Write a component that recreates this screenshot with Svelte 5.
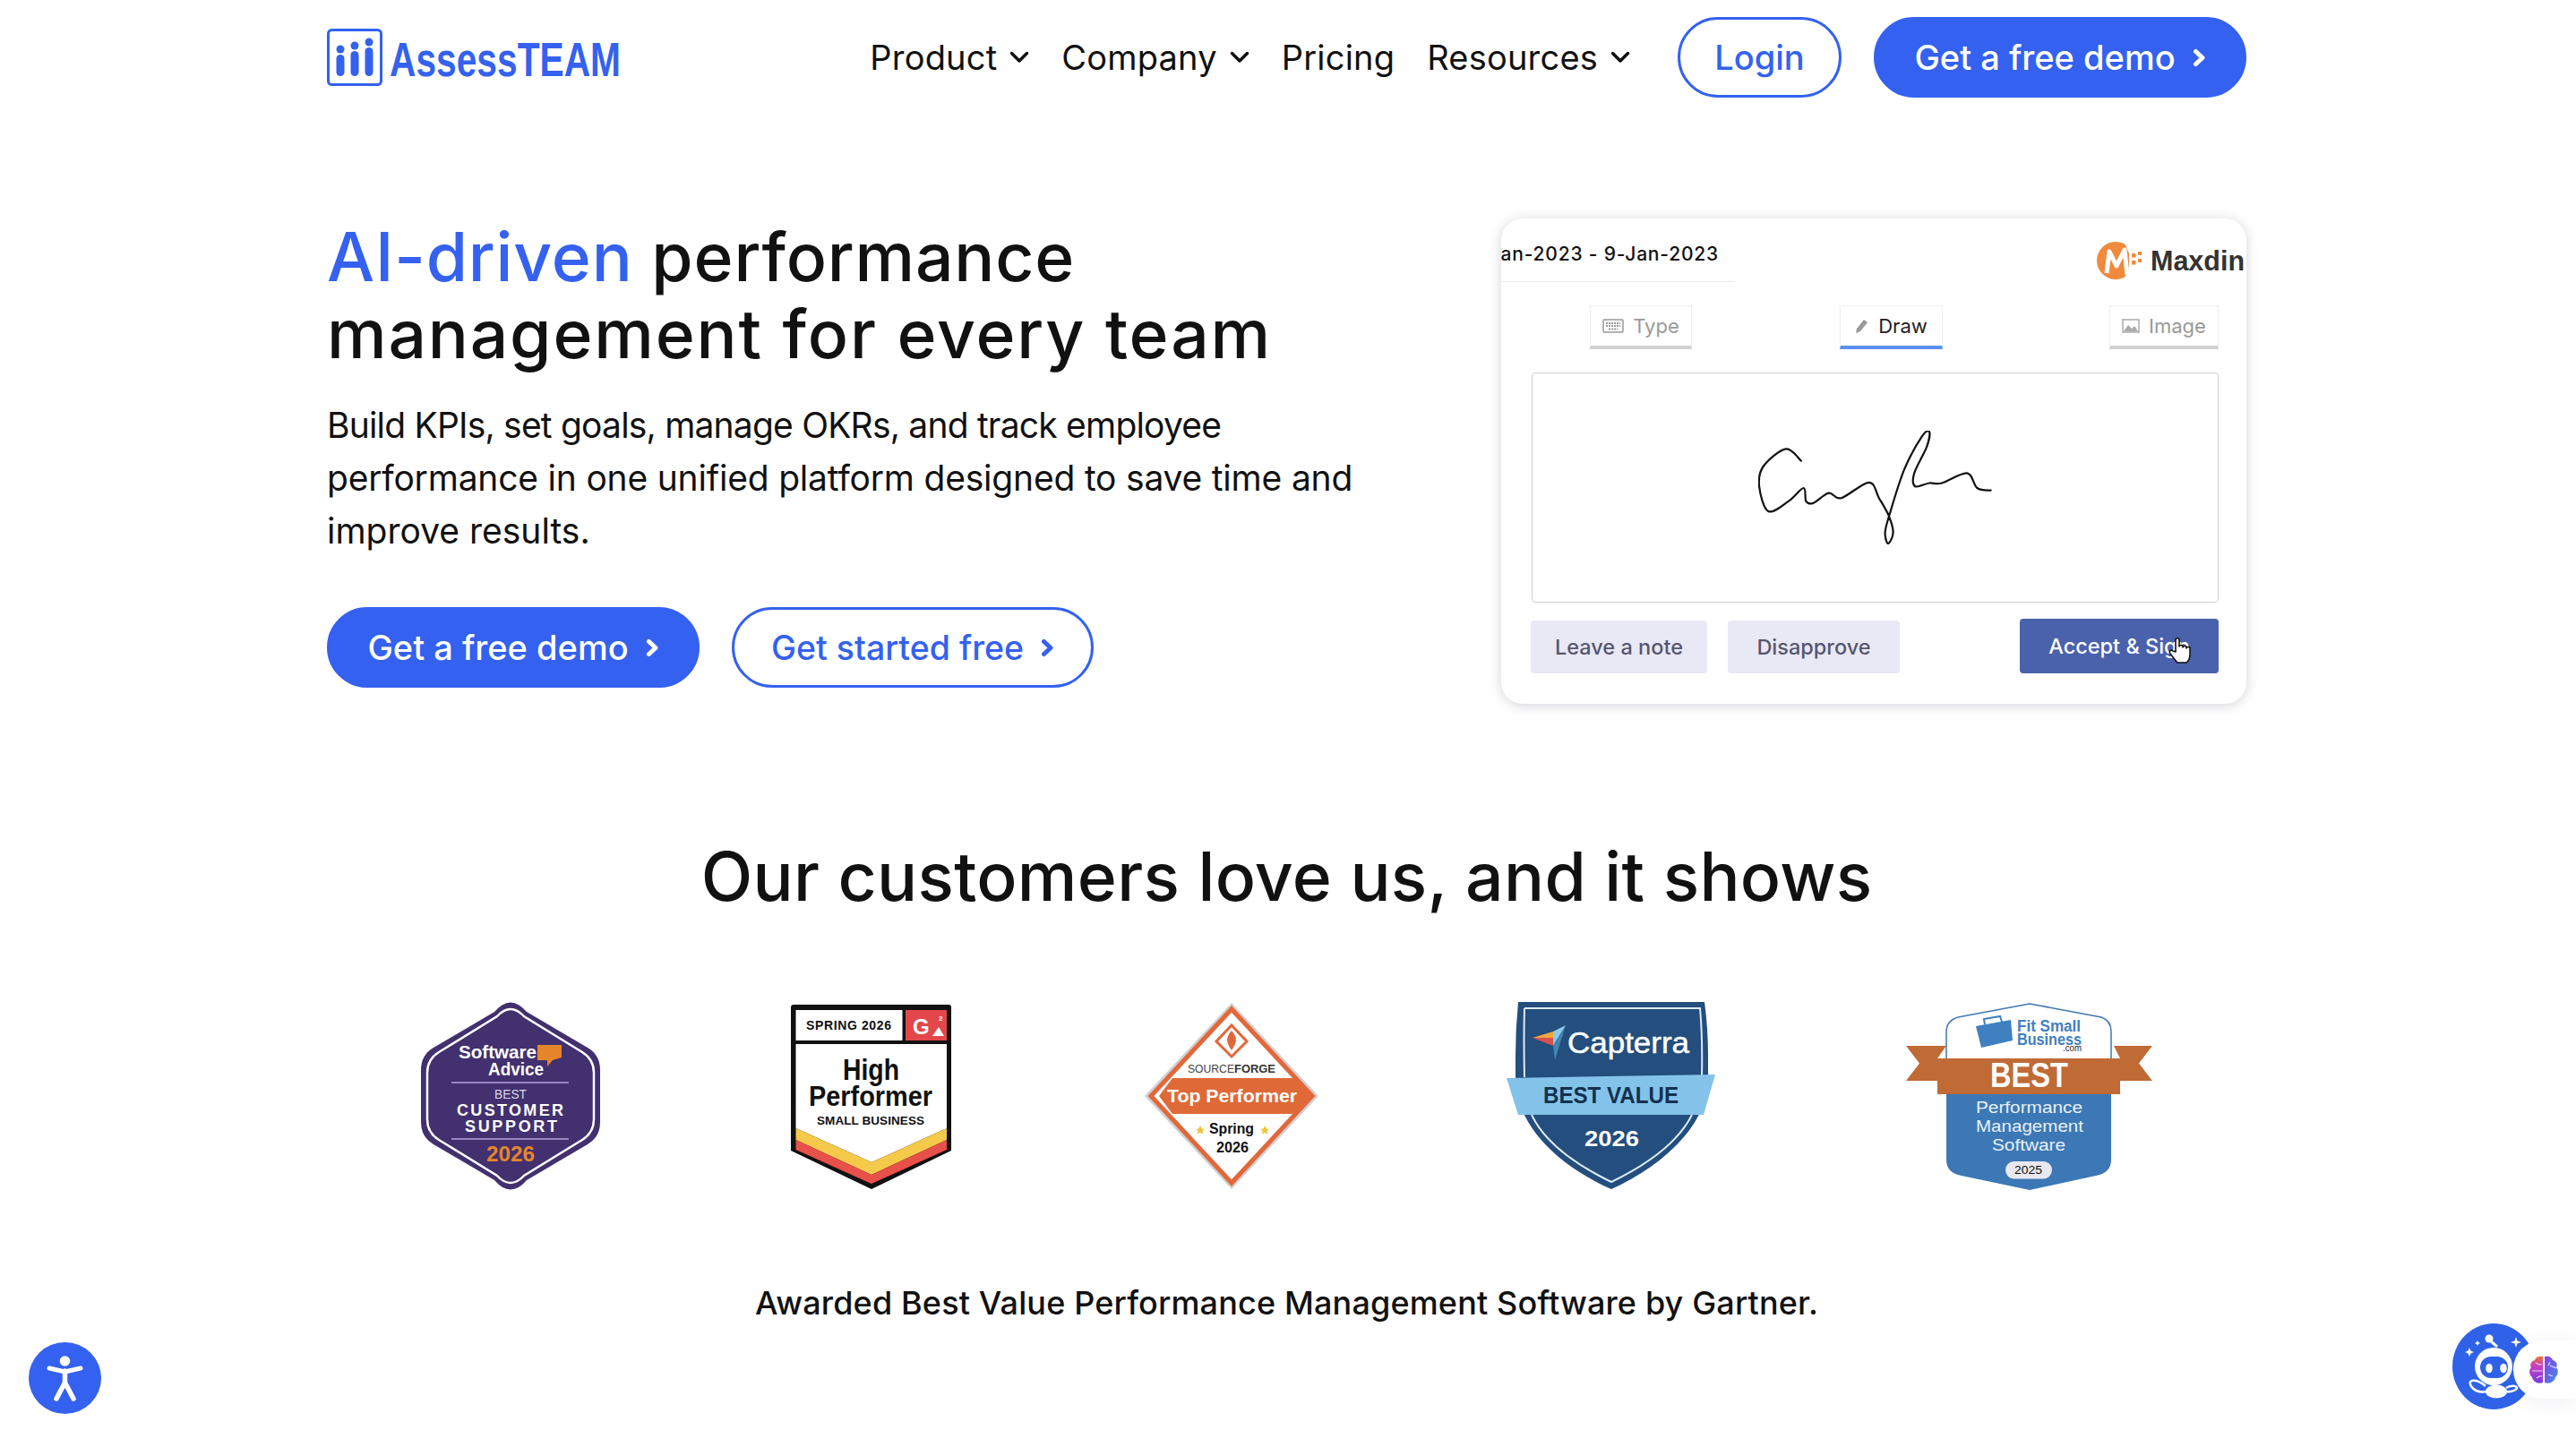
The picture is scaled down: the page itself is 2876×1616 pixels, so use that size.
<script>
	// signature traced from the reference, smoothed into a path
	const signature = [
		[47.8,33.7],[30.9,20.4],[5.6,40],[1.1,62.2],[11.2,90],[33.7,78.9],[50.6,64],[53.4,78.9],[61.8,80.7],
		[78.7,69.6],[92.7,75.2],[123.6,57.8],[134.8,75.2],[146,95.6],[150.6,114],[144.9,126],[141.6,114],[146,95.6],
		[162.9,43.7],[182.6,6.7],[191,1],[188.2,17.8],[174.2,47.4],[175.3,62.2],[191,58.5],[205,58.5],[233.1,47.4],
		[244.4,64],[259.6,66.7]
	];

	function smooth(pts) {
		let d = `M${pts[0][0]} ${pts[0][1]}`;
		for (let i = 0; i < pts.length - 1; i++) {
			const p0 = pts[i - 1] || pts[i];
			const p1 = pts[i];
			const p2 = pts[i + 1];
			const p3 = pts[i + 2] || p2;
			const c1x = p1[0] + (p2[0] - p0[0]) / 6;
			const c1y = p1[1] + (p2[1] - p0[1]) / 6;
			const c2x = p2[0] - (p3[0] - p1[0]) / 6;
			const c2y = p2[1] - (p3[1] - p1[1]) / 6;
			d += ` C${c1x.toFixed(1)} ${c1y.toFixed(1)} ${c2x.toFixed(1)} ${c2y.toFixed(1)} ${p2[0]} ${p2[1]}`;
		}
		return d;
	}

	const navItems = [
		{ label: 'Product', caret: true },
		{ label: 'Company', caret: true },
		{ label: 'Pricing', caret: false },
		{ label: 'Resources', caret: true }
	];
</script>

<div class="page">
	<header class="nav">
		<svg class="logo" width="332" height="64" viewBox="0 0 332 64">
			<rect x="1.5" y="1.5" width="59" height="61" rx="4" fill="none" stroke="#3461f0" stroke-width="3" />
			<g fill="#3461f0">
				<circle cx="15" cy="23" r="4.5" /><rect x="10.5" y="29" width="9" height="24" rx="4.5" />
				<circle cx="31" cy="19" r="4.5" /><rect x="26.5" y="25" width="9" height="28" rx="4.5" />
				<circle cx="47" cy="15" r="4.5" /><rect x="42.5" y="21" width="9" height="32" rx="4.5" />
			</g>
			<text class="sans heavy" x="70" y="53" font-size="54" fill="#3461f0" textLength="258" lengthAdjust="spacingAndGlyphs">AssessTEAM</text>
		</svg>

		<nav class="links">
			{#each navItems as item}
				<span class="link">
					{item.label}
					{#if item.caret}
						<svg width="22" height="14" viewBox="0 0 22 14"><path d="M2.500 2.500l8.500 8.500 8.500-8.500" fill="none" stroke="#111" stroke-width="3.500" stroke-linecap="round" stroke-linejoin="round" /></svg>
					{/if}
				</span>
			{/each}
		</nav>

		<button class="btn outline login">Login</button>
		<button class="btn solid nav-demo">
			Get a free demo
			<svg width="15" height="21" viewBox="0 0 15 21"><path d="M3.500 3.500l7.500 7-7.500 7" fill="none" stroke="#fff" stroke-width="5" stroke-linecap="round" stroke-linejoin="round" /></svg>
		</button>
	</header>

	<section class="hero">
		<div class="hero-copy">
			<h1><span class="accent">AI-driven</span> performance<br /><span class="h1-second">management for every team</span></h1>
			<p><span class="p-first">Build KPIs, set goals, manage OKRs, and track employee</span><br /><span class="p-second">performance in one unified platform designed to save time and</span><br />improve results.</p>
			<div class="cta">
				<button class="btn solid hero-demo">
					Get a free demo
					<svg width="15" height="21" viewBox="0 0 15 21"><path d="M3.500 3.500l7.500 7-7.500 7" fill="none" stroke="#fff" stroke-width="5" stroke-linecap="round" stroke-linejoin="round" /></svg>
				</button>
				<button class="btn outline started">
					Get started free
					<svg width="15" height="21" viewBox="0 0 15 21"><path d="M3.500 3.500l7.500 7-7.500 7" fill="none" stroke="#3461f0" stroke-width="5" stroke-linecap="round" stroke-linejoin="round" /></svg>
				</button>
			</div>
		</div>

		<div class="card">
			<div class="card-head">
				<div class="dates"><span>9-Jan-2023 - 9-Jan-2023</span></div>
				<svg class="maxdin" width="167" height="44" viewBox="0 0 167 44">
					<circle cx="21" cy="22" r="21" fill="#f08a3c" />
					<path d="M30 0H44V44H30L36 30V14Z" fill="#fff" />
					<path d="M11 36L14 12 22 28 31 10 34 38" fill="none" stroke="#fff" stroke-width="5" stroke-linejoin="round" />
					<g fill="#f08a3c"><rect x="39" y="14" width="4.500" height="4.500" /><rect x="46" y="12" width="4" height="4" /><rect x="39" y="22" width="4.500" height="4.500" /><rect x="46" y="20" width="4" height="4" /></g>
					<text class="sans heavy" x="60" y="33" font-size="32" fill="#333" textLength="105" lengthAdjust="spacingAndGlyphs">Maxdin</text>
				</svg>
			</div>

			<div class="tabs">
				<span class="tab type">
					<svg width="24" height="16" viewBox="0 0 24 16"><rect x="1" y="1" width="22" height="14" rx="1" fill="none" stroke="#999" stroke-width="1.5" /><path d="M4 5h16M4 8h16M7 11.500h10" stroke="#999" stroke-width="2" stroke-dasharray="2 1" /></svg>
					Type
				</span>
				<span class="tab draw">
					<svg width="16" height="18" viewBox="0 0 16 18"><path d="M1 17l1-5 8-10 4 3-8 10z" fill="#999" /></svg>
					Draw
				</span>
				<span class="tab image">
					<svg width="20" height="16" viewBox="0 0 20 16"><rect x="1" y="1" width="18" height="14" fill="none" stroke="#aaa" stroke-width="1.5" /><path d="M2 14l5-7 4 4 3-3 4 6z" fill="#aaa" /></svg>
					Image
				</span>
			</div>

			<div class="canvas">
				<svg width="262" height="127" viewBox="0 0 262 127"><path d={smooth(signature)} fill="none" stroke="#111" stroke-width="2.200" stroke-linecap="round" /></svg>
			</div>

			<div class="actions">
				<button class="ghost note">Leave a note</button>
				<button class="ghost reject">Disapprove</button>
				<button class="accept">
					Accept &amp; Sign
					<svg class="hand" width="26" height="30" viewBox="0 0 26 30"><path d="M8 17V4c0-3 4-3 4 0v7c0-2 4-2 4 0v1c0-2 4-2 4 0v1c0-2 4-2 4 0v7c0 4-2 8-4 9H10c-2-2-4-5-8-10-2-3 1-5 3-3z" fill="#fff" stroke="#111" stroke-width="1.6" stroke-linejoin="round" /></svg>
				</button>
			</div>
		</div>
	</section>

	<section class="proof">
		<h2>Our customers love us, and it shows</h2>

		<div class="badges">
			<!-- Software Advice -->
			<svg width="200" height="210" viewBox="0 -1 200 210">
				<path d="M82 10Q100-11 118 10L186 50Q200 58 200 75V133Q200 150 186 158L118 198Q100 219 82 198L14 158Q0 150 0 133V75Q0 58 14 50Z" fill="#42306f" />
				<path d="M85 15Q100-1 115 15L180 55Q193 63 193 78V130Q193 145 180 153L115 193Q100 209 85 193L20 153Q7 145 7 130V78Q7 63 20 55Z" fill="none" stroke="#fff" stroke-width="2.500" />
				<path d="M130 47h27v14l-10 3-6 7v-7h-11z" fill="#e5852a" />
				<text class="sans heavy" x="42" y="62" font-size="21" fill="#fff" textLength="87" lengthAdjust="spacingAndGlyphs">Software</text>
				<text class="sans heavy" x="75" y="81" font-size="21" fill="#fff" textLength="62" lengthAdjust="spacingAndGlyphs">Advice</text>
				<path d="M34 89h131M34 152h131" stroke="#b3a8dc" stroke-width="1.5" />
				<text class="sans" x="82" y="107" font-size="15" fill="#dcd8ee" textLength="36" lengthAdjust="spacingAndGlyphs">BEST</text>
				<text class="sans heavy" x="40" y="126" font-size="18" fill="#fff" textLength="119" lengthAdjust="spacing">CUSTOMER</text>
				<text class="sans heavy" x="49" y="144" font-size="18" fill="#fff" textLength="103" lengthAdjust="spacing">SUPPORT</text>
				<text class="sans heavy" x="73" y="177" font-size="23" fill="#e5852a" textLength="54" lengthAdjust="spacingAndGlyphs">2026</text>
			</svg>

			<!-- G2 -->
			<svg width="179" height="207" viewBox="0 0 179 207">
				<path d="M3 1H176Q179 1 179 4V164L90 207 0 164V4Q0 1 3 1Z" fill="#111" />
				<rect x="5.500" y="7" width="119" height="34" fill="#fff" />
				<rect x="128" y="7" width="46" height="34" fill="#e4474b" />
				<path d="M5.500 45H174V139L90 177 5.500 139Z" fill="#fff" />
				<path d="M5.500 139L90 177 174 139V152L90 191 5.500 152Z" fill="#f5c94a" />
				<path d="M5.500 152L90 191 174 152V163L90 201 5.500 163Z" fill="#e9504a" />
				<text class="sans heavy" x="17" y="29" font-size="14" fill="#111" textLength="95" lengthAdjust="spacing">SPRING 2026</text>
				<text class="sans heavy" x="136" y="34" font-size="24" fill="#fff">G</text>
				<text class="sans heavy" x="165" y="19" font-size="8" fill="#fff">2</text>
				<path d="M158 36l7-10 6 10z" fill="#fff" />
				<text class="sans heavy" x="58" y="85" font-size="33" fill="#111" textLength="63" lengthAdjust="spacingAndGlyphs">High</text>
				<text class="sans heavy" x="20" y="114" font-size="31" fill="#111" textLength="138" lengthAdjust="spacingAndGlyphs">Performer</text>
				<text class="sans heavy" x="29" y="135" font-size="13.500" fill="#111" textLength="120" lengthAdjust="spacing">SMALL BUSINESS</text>
			</svg>

			<!-- SourceForge -->
			<svg class="sf" width="194" height="208" viewBox="0 0 194 208">
				<path d="M97 0L194 104 97 208 0 104Z" fill="#cfcfcf" />
				<path d="M97 7L187 104 97 201 7 104Z" fill="#fff" stroke="#e2673a" stroke-width="5" />
				<path d="M31 84H170L184 104 170 124H31L16 104Z" fill="#df6a37" />
				<path d="M97 25L114 43 97 60 80 43Z" fill="none" stroke="#e2673a" stroke-width="3" />
				<path d="M97 31c6 7 7 12 0 22c-7-10-6-15 0-22z" fill="#e2673a" />
				<text class="sans" x="48" y="78" font-size="13" fill="#444" textLength="52" lengthAdjust="spacingAndGlyphs">SOURCE</text>
				<text class="sans heavy" x="100" y="78" font-size="13" fill="#333" textLength="46" lengthAdjust="spacingAndGlyphs">FORGE</text>
				<text class="sans heavy" x="25" y="111" font-size="21" fill="#fff" textLength="145" lengthAdjust="spacingAndGlyphs">Top Performer</text>
				<text class="sans heavy" x="72" y="146" font-size="16" fill="#111" textLength="50" lengthAdjust="spacingAndGlyphs">Spring</text>
				<text class="sans heavy" x="80" y="167" font-size="16" fill="#111" textLength="36" lengthAdjust="spacingAndGlyphs">2026</text>
				<path d="M62 137l1.500 3.500 3.500.3-2.700 2.300.9 3.600-3.200-2-3.200 2 .9-3.600-2.700-2.300 3.500-.3zM134 137l1.500 3.500 3.500.3-2.700 2.300.9 3.600-3.200-2-3.200 2 .9-3.600-2.700-2.300 3.500-.3z" fill="#f3c13a" />
			</svg>

			<!-- Capterra -->
			<svg width="233" height="210" viewBox="0 0 233 210">
				<path d="M13 0H221Q225 30 225 60V85C225 140 170 185 117 209C62 185 10 140 10 85V60Q10 30 13 0Z" fill="#234e7d" />
				<path d="M20 7H216Q219 40 218 84M207 126C190 160 150 185 117 201C84 185 44 160 28 126M20 84Q19 40 20 7" fill="none" stroke="#dcebf5" stroke-width="2" />
				<path d="M0 85L233 81 220 126H13Z" fill="#83c3e9" />
				<path d="M29 40L52 33V40Z" fill="#f2a63a" /><path d="M29 40H52V49Z" fill="#d9514e" /><path d="M66 26L52 33V49Z" fill="#8ecae6" /><path d="M66 26L52 49 54 65Z" fill="#3f86b5" />
				<text class="sans" x="68" y="57" font-size="34" fill="#fff" stroke="#fff" stroke-width=".5" textLength="136" lengthAdjust="spacingAndGlyphs">Capterra</text>
				<text class="sans heavy" x="41" y="113" font-size="25" fill="#14304f" textLength="151" lengthAdjust="spacingAndGlyphs">BEST VALUE</text>
				<text class="sans heavy" x="87" y="161" font-size="24" fill="#fff" textLength="61" lengthAdjust="spacingAndGlyphs">2026</text>
			</svg>

			<!-- Fit Small Business -->
			<svg width="275" height="209" viewBox="0 0 275 209">
				<path d="M0 48H45L35 62V87H0L15 67.500ZM275 48H232L239 62V87H275L260 67.500Z" fill="#c06a35" />
				<path d="M45 70V32Q45 20 58 16L138 1 218 16Q229 20 229 32V70Z" fill="#fff" stroke="#3f78b3" stroke-width="1.500" />
				<path d="M45 100H229V175Q229 190 212 193L138 209 62 193Q45 190 45 175Z" fill="#3c78b5" />
				<rect x="35" y="62" width="204" height="40" fill="#c06a35" />
				<path d="M78 26L117 19 119 42 84 50Z" fill="#3f80c0" />
				<path d="M88 24L87 18 105 15 107 21" fill="none" stroke="#3f80c0" stroke-width="2" />
				<text class="sans heavy" x="124" y="32" font-size="18" fill="#3f80c0" textLength="71" lengthAdjust="spacingAndGlyphs">Fit Small</text>
				<text class="sans heavy" x="124" y="47" font-size="18" fill="#3f80c0" textLength="72" lengthAdjust="spacingAndGlyphs">Business</text>
				<text class="sans" x="175" y="54" font-size="10" fill="#222" textLength="21" lengthAdjust="spacingAndGlyphs">.com</text>
				<text class="sans heavy" x="94" y="94" font-size="38" fill="#fff" textLength="87" lengthAdjust="spacingAndGlyphs">BEST</text>
				<text class="sans" x="78" y="123" font-size="18" fill="#e8f1fa" textLength="119" lengthAdjust="spacingAndGlyphs">Performance</text>
				<text class="sans" x="78" y="144" font-size="18" fill="#e8f1fa" textLength="120" lengthAdjust="spacingAndGlyphs">Management</text>
				<text class="sans" x="96" y="165" font-size="18" fill="#e8f1fa" textLength="82" lengthAdjust="spacingAndGlyphs">Software</text>
				<rect x="111" y="177" width="52" height="19.500" rx="9.700" fill="#e8e8ee" />
				<text class="sans" x="121" y="191" font-size="13.500" fill="#111" textLength="31" lengthAdjust="spacingAndGlyphs">2025</text>
			</svg>
		</div>

		<p class="award">Awarded Best Value Performance Management Software by Gartner.</p>
	</section>

	<div class="a11y">
		<svg width="81" height="80" viewBox="0 0 81 80">
			<circle cx="40.500" cy="21" r="5.800" fill="#fff" />
			<path d="M23 29L40.500 33 58 29" fill="none" stroke="#fff" stroke-width="5" stroke-linecap="round" stroke-linejoin="round" />
			<path d="M40.500 32V45L31 63M40.500 45L50 63" fill="none" stroke="#fff" stroke-width="5.500" stroke-linecap="round" stroke-linejoin="round" />
		</svg>
	</div>

	<div class="chat">
		<div class="bot">
			<svg width="92" height="96" viewBox="0 0 92 96">
				<circle cx="46" cy="48" r="21" fill="#fff" />
				<rect x="31" y="37" width="31" height="24" rx="12" fill="#2f62e8" />
				<ellipse cx="41" cy="50" rx="3.800" ry="5.200" fill="#fff" /><ellipse cx="57" cy="50" rx="3.800" ry="5.200" fill="#fff" />
				<circle cx="41" cy="17" r="4.500" fill="#fff" />
				<path d="M42 19L50 26" stroke="#fff" stroke-width="3" />
				<ellipse cx="49" cy="76" rx="12" ry="7.500" fill="#fff" />
				<path d="M37 70C28 62 18 62 20 68S30 78 37 76" fill="none" stroke="#fff" stroke-width="2.500" />
				<path d="M60 72C66 68 72 70 72 72S66 77 60 76" fill="none" stroke="#fff" stroke-width="2.500" />
				<path d="M19 27l1.500 3.500L24 32l-3.500 1.500L19 37l-1.500-3.500L14 32l3.500-1.500zM28 19l1 2 2 1-2 1-1 2-1-2-2-1 2-1zM71 15l1.500 4.500L77 21l-4.500 1.500L71 27l-1.500-4.500L65 21l4.500-1.500z" fill="#fff" />
			</svg>
		</div>
		<div class="pill">
			<svg width="34" height="34" viewBox="0 0 34 34">
				<defs>
					<linearGradient id="brainA" x1="0" y1="0" x2="0" y2="1"><stop offset="0" stop-color="#e6762e" /><stop offset=".35" stop-color="#c93fc0" /><stop offset="1" stop-color="#7a3be0" /></linearGradient>
					<linearGradient id="brainB" x1="0" y1="0" x2="1" y2="1"><stop offset="0" stop-color="#8a3fe0" /><stop offset="1" stop-color="#3f8df0" /></linearGradient>
				</defs>
				<path d="M16 2C11 1 8 3 7 6 3 7 1 11 3 14 0 17 1 23 4 25 5 30 10 33 16 31Z" fill="url(#brainA)" />
				<path d="M18 2C23 1 26 3 27 6 31 7 33 11 31 14 34 17 33 23 30 25 29 30 24 33 18 31Z" fill="url(#brainB)" />
				<path d="M4 18H15M8 9L12 11H15M9 26L12 24H15M24 8L22 12M24 12L31 15M22 22L27 24" fill="none" stroke="#fff" stroke-width="1.200" stroke-opacity=".8" />
			</svg>
		</div>
	</div>
</div>

<style>
	:global(body) {
		margin: 0;
		background: #fff;
	}

	.page {
		padding: 0 368px 0 365px;
		font-family: Inter, "Open Sans", sans-serif;
		color: #111;
	}

	.sans {
		font-family: "Liberation Sans", Arial, sans-serif;
	}

	.heavy {
		font-weight: 700;
	}

	.nav {
		display: flex;
		align-items: center;
		height: 128px;
	}

	.logo {
		flex: none;
	}

	.links {
		display: flex;
		gap: 36px;
		margin-left: auto;
		margin-right: 53px;
	}

	.link {
		display: flex;
		align-items: center;
		gap: 14px;
		font-size: 38px;
		letter-spacing: 0.2px;
		color: #111;
	}

	.btn {
		display: flex;
		align-items: center;
		justify-content: center;
		gap: 19px;
		height: 90px;
		padding: 0;
		border-radius: 45px;
		border: 3px solid #3461f0;
		font-family: inherit;
		font-size: 38px;
		font-weight: 500;
		white-space: nowrap;
		box-sizing: border-box;
	}

	.solid {
		background: #3461f0;
		color: #fff;
	}

	.outline {
		background: #fff;
		color: #3461f0;
	}

	.login {
		width: 183px;
		margin-right: 36px;
	}

	.nav-demo,
	.hero-demo {
		width: 416px;
	}

	.started {
		width: 404px;
		font-size: 37.500px;
	}

	.hero {
		display: flex;
		justify-content: space-between;
		align-items: flex-start;
		margin-top: 116px;
	}

	h1 {
		margin: 0;
		font-size: 75px;
		line-height: 86px;
		font-weight: 500;
		letter-spacing: 0.8px;
	}

	.h1-second {
		letter-spacing: 1.800px;
	}

	.accent {
		color: #3461f0;
	}

	.hero-copy p {
		margin: 29px 0 0;
		font-size: 39px;
		line-height: 59px;
	}

	.p-first {
		letter-spacing: -0.8px;
	}

	.p-second {
		letter-spacing: -0.2px;
	}

	.cta {
		display: flex;
		gap: 36px;
		margin-top: 56px;
	}

	.card {
		width: 832px;
		height: 542px;
		flex: none;
		box-sizing: border-box;
		border-radius: 24px;
		box-shadow: 0 2px 14px rgba(40, 40, 70, 0.2);
		overflow: hidden;
		font-family: Inter, sans-serif;
		background: #fff;
	}

	.card-head {
		display: flex;
		height: 72px;
		align-items: flex-start;
		justify-content: space-between;
	}

	.dates {
		display: flex;
		justify-content: flex-end;
		width: 261px;
		height: 71px;
		padding-right: 18px;
		box-sizing: border-box;
		overflow: hidden;
		border-bottom: 1px solid #eee;
		font-size: 21px;
		font-weight: 500;
		letter-spacing: 0.8px;
		line-height: 80px;
		white-space: nowrap;
	}

	.maxdin {
		margin-top: 25px;
	}

	.tabs {
		display: flex;
		gap: 165px;
		margin: 25px 31px 0 99px;
	}

	.tab {
		display: flex;
		align-items: center;
		justify-content: center;
		gap: 10px;
		height: 49px;
		box-sizing: border-box;
		border: 1px solid #eee;
		border-bottom: 4px solid #d0d0d0;
		font-size: 22px;
		color: #999;
	}

	.type {
		width: 114px;
	}

	.draw {
		width: 115px;
		color: #222;
		border-bottom-color: #5b8ff0;
	}

	.image {
		width: 122px;
		margin-left: auto;
	}

	.canvas {
		display: flex;
		align-items: center;
		justify-content: center;
		height: 257px;
		margin: 26px 31px 0 34px;
		box-sizing: border-box;
		border: 1px solid #cfcfd4;
		border-radius: 4px;
	}

	.actions {
		display: flex;
		align-items: flex-start;
		gap: 23px;
		margin: 18px 31px 0 33px;
	}

	.ghost {
		height: 59px;
		margin-top: 2px;
		border: 0;
		border-radius: 4px;
		background: #e9e8f5;
		color: #56566e;
		font-family: inherit;
		font-size: 23.500px;
		font-weight: 500;
	}

	.note {
		width: 197px;
	}

	.reject {
		width: 192px;
	}

	.accept {
		position: relative;
		width: 222px;
		height: 61px;
		margin-left: auto;
		border: 0;
		border-radius: 4px;
		background: #4a62ab;
		color: #fff;
		font-family: inherit;
		font-size: 23.500px;
		font-weight: 500;
	}

	.hand {
		position: absolute;
		right: 30px;
		top: 20px;
	}

	.proof {
		text-align: center;
	}

	h2 {
		margin: 147px 0 0;
		font-size: 75px;
		line-height: 92px;
		font-weight: 500;
		letter-spacing: 0.300px;
	}

	.badges {
		display: flex;
		justify-content: center;
		align-items: center;
		gap: 213px;
		margin-top: 94px;
	}

	.sf {
		margin: 0 -3px 0 3px;
	}

	.award {
		margin: 98px 0 0;
		font-size: 36px;
		line-height: 57px;
		font-weight: 500;
		letter-spacing: 0.150px;
	}

	.a11y {
		position: fixed;
		left: 32px;
		top: 1499px;
		width: 81px;
		height: 80px;
		border-radius: 50%;
		background: #3461f0;
	}

	.chat {
		position: fixed;
		right: 0;
		top: 1478px;
		width: 138px;
		height: 96px;
	}

	.bot {
		position: absolute;
		left: 0;
		top: 0;
		width: 92px;
		height: 96px;
		border-radius: 50%;
		background: #2f62e8;
	}

	.pill {
		position: absolute;
		right: 0;
		top: 19px;
		width: 70px;
		height: 65px;
		display: flex;
		align-items: center;
		padding-left: 17px;
		box-sizing: border-box;
		border-radius: 32px 0 0 32px;
		background: #fff;
		box-shadow: 0 4px 24px rgba(60, 60, 110, 0.08);
	}
</style>
